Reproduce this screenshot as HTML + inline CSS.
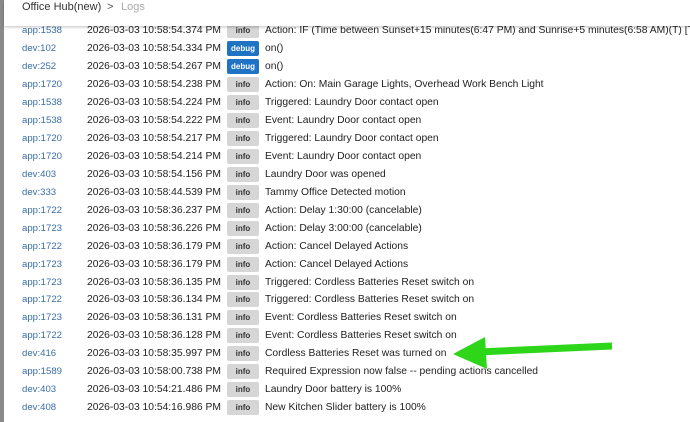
<!DOCTYPE html>
<html><head><style>
body{margin:0;width:690px;height:422px;overflow:hidden;background:#fff;font-family:"Liberation Sans",sans-serif;position:relative}
.bar{position:absolute;left:0;top:0;width:4px;height:422px;background:#8a8a8a}
.hdr{position:absolute;left:4px;top:0;width:686px;height:26px;background:#fff;box-shadow:0 1px 3px rgba(0,0,0,.25);z-index:2;font-size:11px;line-height:20px}
.hdr span{position:absolute;top:-3px}
.row{position:absolute;left:0;height:18px;font-size:10.3px;white-space:nowrap;color:#222}
.row .s{position:absolute;left:22px;top:3px;color:#3a6ea5;font-size:9.6px}
.row .t{position:absolute;left:87px;top:3px}
.row .b{position:absolute;left:227px;top:1px;width:32px;height:15px;border-radius:2px;background:#d6d6d6;font-size:8px;font-weight:bold;text-align:center;line-height:15px;color:#333}
.row .b.d{background:#1f73c4;color:#fff}
.row .m{position:absolute;left:265px;top:3px}
</style></head><body>
<div class="bar"></div>
<div class="hdr"><span style="left:18px;color:#333">Office Hub(new)</span><span style="left:103px;color:#555">&gt;</span><span style="left:117px;color:#aaa">Logs</span></div>
<div class="row" style="top:22px"><span class="s">app:1538</span><span class="t">2026-03-03 10:58:54.374 PM</span><span class="b">info</span><span class="m">Action: IF (Time between Sunset+15 minutes(6:47 PM) and Sunrise+5 minutes(6:58 AM)(T) [T</span></div>
<div class="row" style="top:40px"><span class="s">dev:102</span><span class="t">2026-03-03 10:58:54.334 PM</span><span class="b d">debug</span><span class="m">on()</span></div>
<div class="row" style="top:58px"><span class="s">dev:252</span><span class="t">2026-03-03 10:58:54.267 PM</span><span class="b d">debug</span><span class="m">on()</span></div>
<div class="row" style="top:76px"><span class="s">app:1720</span><span class="t">2026-03-03 10:58:54.238 PM</span><span class="b">info</span><span class="m">Action: On: Main Garage Lights, Overhead Work Bench Light</span></div>
<div class="row" style="top:94px"><span class="s">app:1538</span><span class="t">2026-03-03 10:58:54.224 PM</span><span class="b">info</span><span class="m">Triggered: Laundry Door contact open</span></div>
<div class="row" style="top:112px"><span class="s">app:1538</span><span class="t">2026-03-03 10:58:54.222 PM</span><span class="b">info</span><span class="m">Event: Laundry Door contact open</span></div>
<div class="row" style="top:130px"><span class="s">app:1720</span><span class="t">2026-03-03 10:58:54.217 PM</span><span class="b">info</span><span class="m">Triggered: Laundry Door contact open</span></div>
<div class="row" style="top:148px"><span class="s">app:1720</span><span class="t">2026-03-03 10:58:54.214 PM</span><span class="b">info</span><span class="m">Event: Laundry Door contact open</span></div>
<div class="row" style="top:166px"><span class="s">dev:403</span><span class="t">2026-03-03 10:58:54.156 PM</span><span class="b">info</span><span class="m">Laundry Door was opened</span></div>
<div class="row" style="top:184px"><span class="s">dev:333</span><span class="t">2026-03-03 10:58:44.539 PM</span><span class="b">info</span><span class="m">Tammy Office Detected motion</span></div>
<div class="row" style="top:202px"><span class="s">app:1722</span><span class="t">2026-03-03 10:58:36.237 PM</span><span class="b">info</span><span class="m">Action: Delay 1:30:00 (cancelable)</span></div>
<div class="row" style="top:220px"><span class="s">app:1723</span><span class="t">2026-03-03 10:58:36.226 PM</span><span class="b">info</span><span class="m">Action: Delay 3:00:00 (cancelable)</span></div>
<div class="row" style="top:238px"><span class="s">app:1722</span><span class="t">2026-03-03 10:58:36.179 PM</span><span class="b">info</span><span class="m">Action: Cancel Delayed Actions</span></div>
<div class="row" style="top:256px"><span class="s">app:1723</span><span class="t">2026-03-03 10:58:36.179 PM</span><span class="b">info</span><span class="m">Action: Cancel Delayed Actions</span></div>
<div class="row" style="top:274px"><span class="s">app:1723</span><span class="t">2026-03-03 10:58:36.135 PM</span><span class="b">info</span><span class="m">Triggered: Cordless Batteries Reset switch on</span></div>
<div class="row" style="top:291px"><span class="s">app:1722</span><span class="t">2026-03-03 10:58:36.134 PM</span><span class="b">info</span><span class="m">Triggered: Cordless Batteries Reset switch on</span></div>
<div class="row" style="top:309px"><span class="s">app:1723</span><span class="t">2026-03-03 10:58:36.131 PM</span><span class="b">info</span><span class="m">Event: Cordless Batteries Reset switch on</span></div>
<div class="row" style="top:327px"><span class="s">app:1722</span><span class="t">2026-03-03 10:58:36.128 PM</span><span class="b">info</span><span class="m">Event: Cordless Batteries Reset switch on</span></div>
<div class="row" style="top:345px"><span class="s">dev:416</span><span class="t">2026-03-03 10:58:35.997 PM</span><span class="b">info</span><span class="m">Cordless Batteries Reset was turned on</span></div>
<div class="row" style="top:363px"><span class="s">app:1589</span><span class="t">2026-03-03 10:58:00.738 PM</span><span class="b">info</span><span class="m">Required Expression now false -- pending actions cancelled</span></div>
<div class="row" style="top:381px"><span class="s">dev:403</span><span class="t">2026-03-03 10:54:21.486 PM</span><span class="b">info</span><span class="m">Laundry Door battery is 100%</span></div>
<div class="row" style="top:399px"><span class="s">dev:408</span><span class="t">2026-03-03 10:54:16.986 PM</span><span class="b">info</span><span class="m">New Kitchen Slider battery is 100%</span></div>
<svg style="position:absolute;left:0;top:0" width="690" height="422">
<line x1="612" y1="346" x2="478" y2="352" stroke="#2ed61a" stroke-width="7"/>
<polygon points="453,354 485,337 487,369" fill="#2ed61a"/>
</svg>
</body></html>
